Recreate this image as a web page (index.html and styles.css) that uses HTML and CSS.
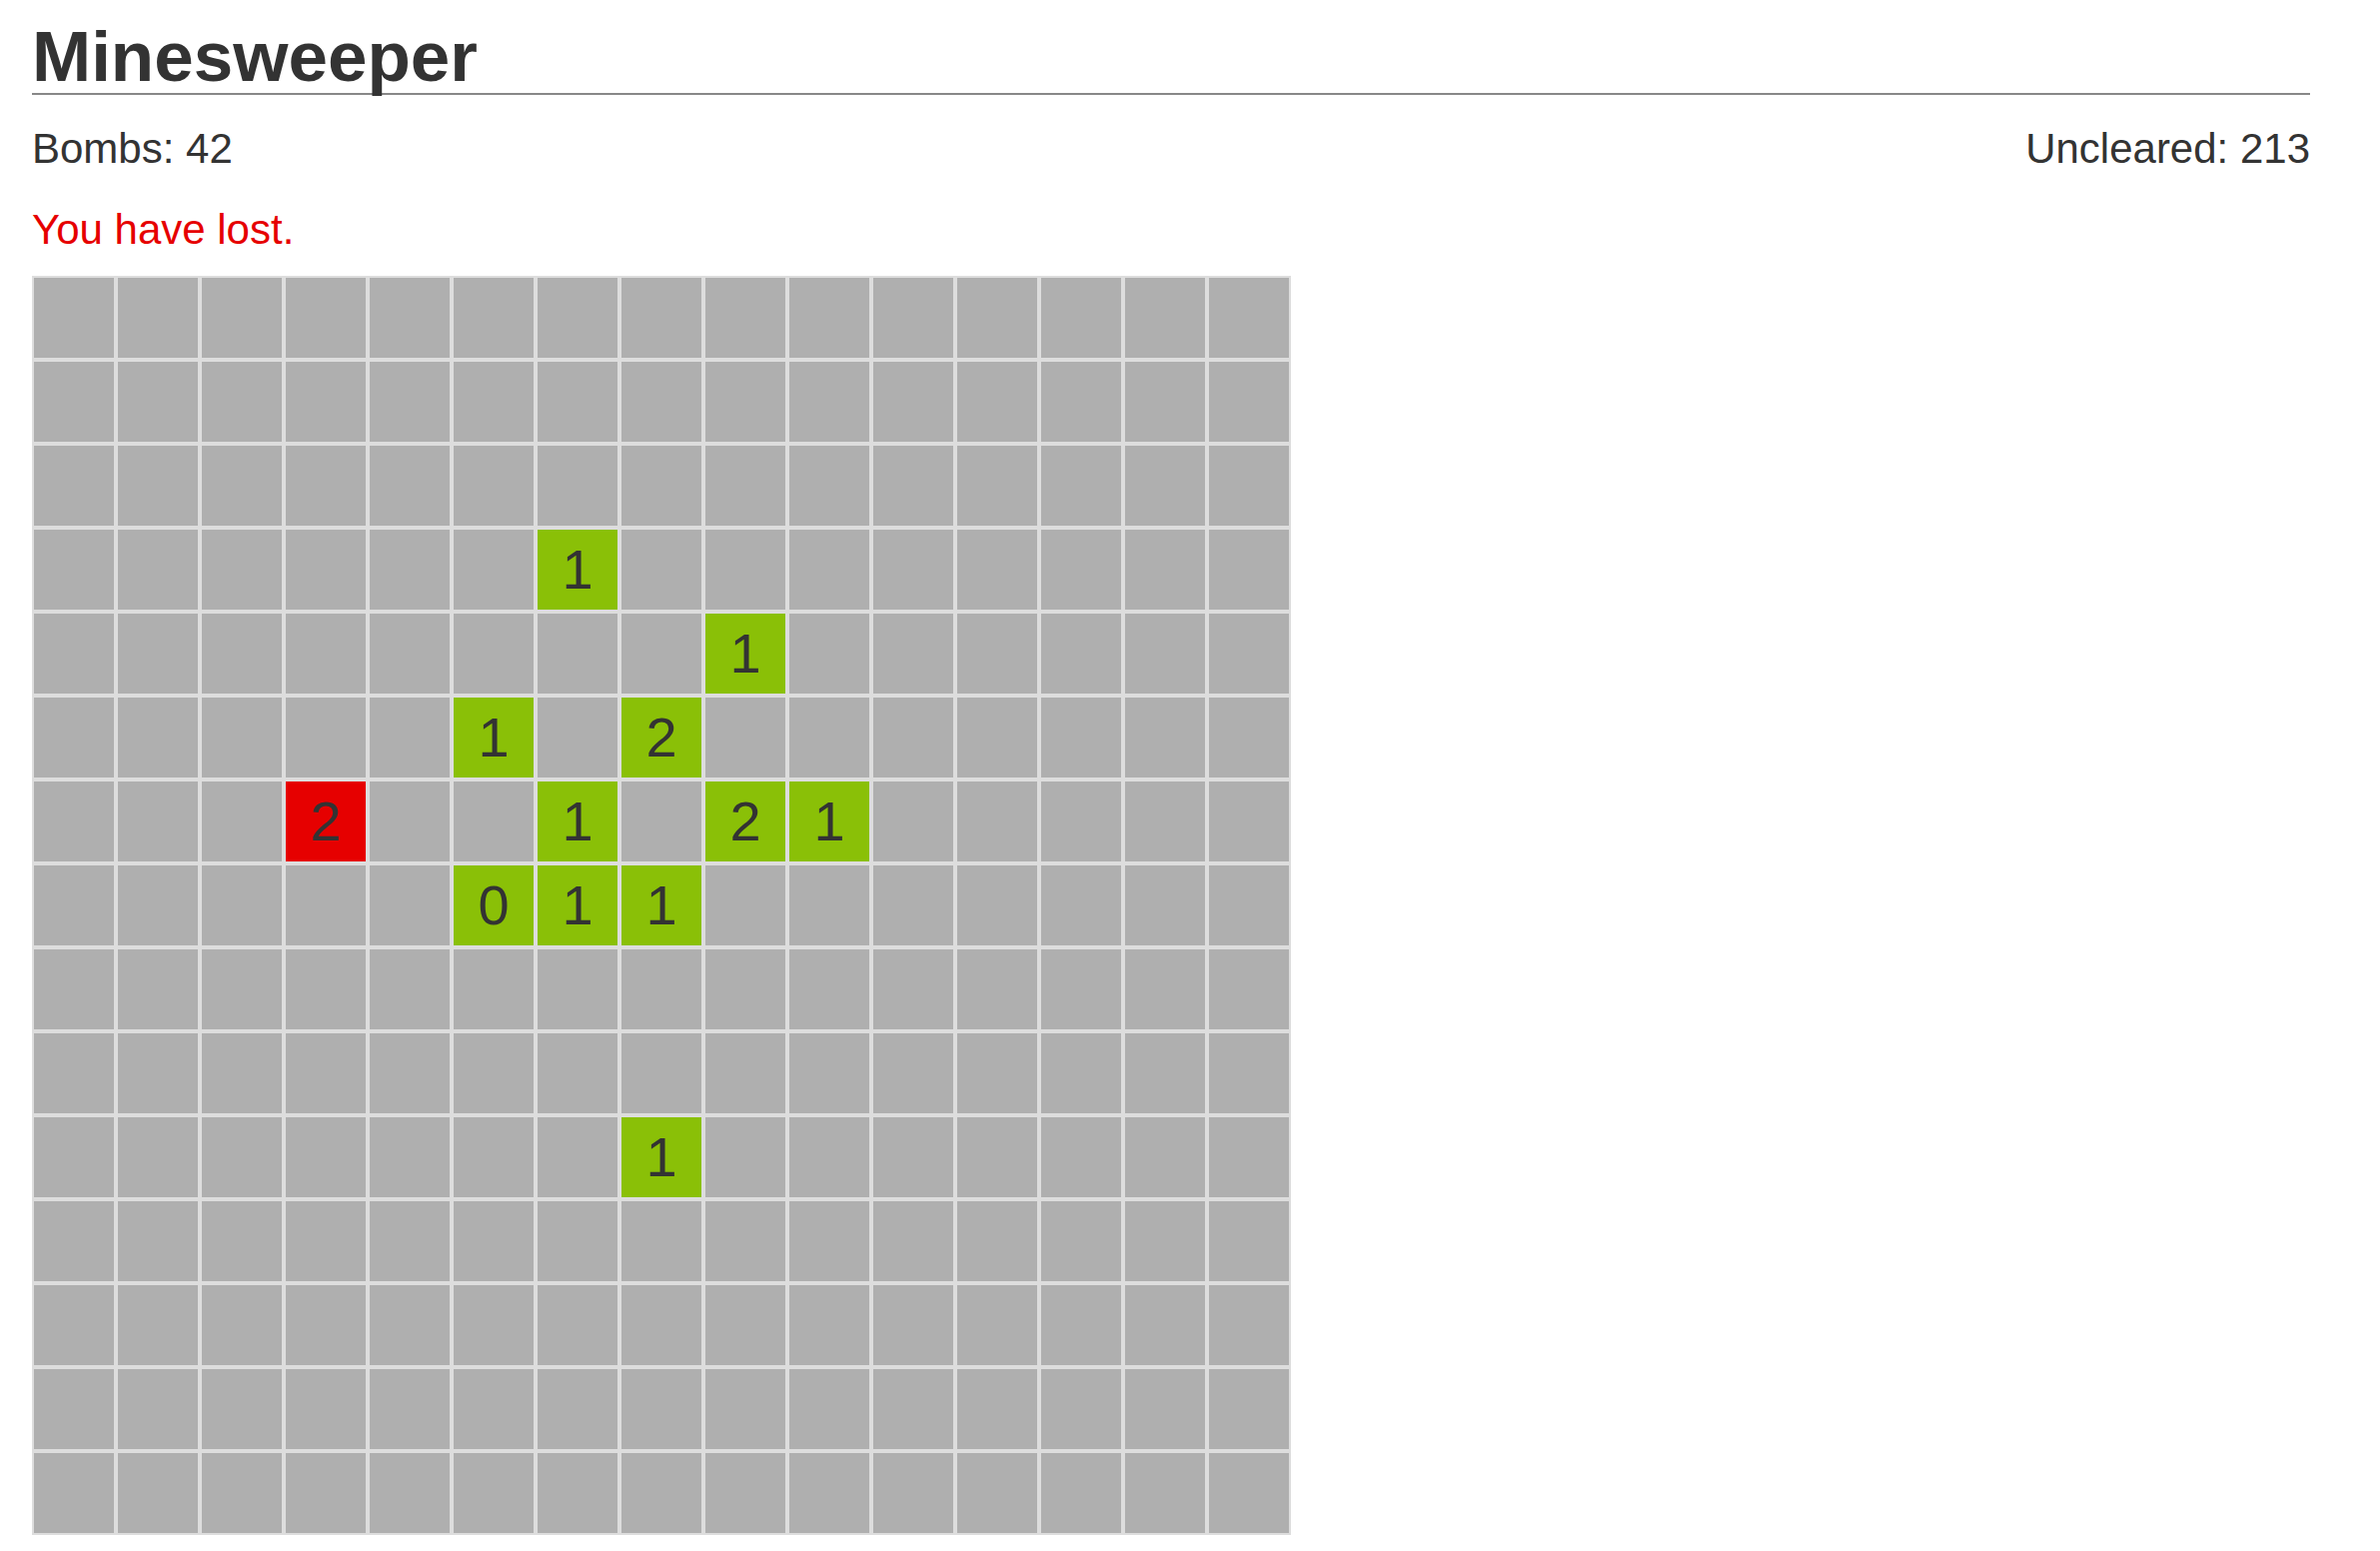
FILE: index.html
```html
<!DOCTYPE html>
<html lang="en">
<head>
<meta charset="utf-8">
<title>Minesweeper</title>
<link rel="stylesheet" href="styles.css">
</head>
<body>
<div class="page">
  <h1 class="title">Minesweeper</h1>
  <div class="stats">
    <span>Bombs: 42</span>
    <span>Uncleared: 213</span>
  </div>
  <p class="status">You have lost.</p>
  <div class="board">
    <div class="cell"></div><div class="cell"></div><div class="cell"></div><div class="cell"></div><div class="cell"></div><div class="cell"></div><div class="cell"></div><div class="cell"></div><div class="cell"></div><div class="cell"></div><div class="cell"></div><div class="cell"></div><div class="cell"></div><div class="cell"></div><div class="cell"></div>
    <div class="cell"></div><div class="cell"></div><div class="cell"></div><div class="cell"></div><div class="cell"></div><div class="cell"></div><div class="cell"></div><div class="cell"></div><div class="cell"></div><div class="cell"></div><div class="cell"></div><div class="cell"></div><div class="cell"></div><div class="cell"></div><div class="cell"></div>
    <div class="cell"></div><div class="cell"></div><div class="cell"></div><div class="cell"></div><div class="cell"></div><div class="cell"></div><div class="cell"></div><div class="cell"></div><div class="cell"></div><div class="cell"></div><div class="cell"></div><div class="cell"></div><div class="cell"></div><div class="cell"></div><div class="cell"></div>
    <div class="cell"></div><div class="cell"></div><div class="cell"></div><div class="cell"></div><div class="cell"></div><div class="cell"></div><div class="cell open">1</div><div class="cell"></div><div class="cell"></div><div class="cell"></div><div class="cell"></div><div class="cell"></div><div class="cell"></div><div class="cell"></div><div class="cell"></div>
    <div class="cell"></div><div class="cell"></div><div class="cell"></div><div class="cell"></div><div class="cell"></div><div class="cell"></div><div class="cell"></div><div class="cell"></div><div class="cell open">1</div><div class="cell"></div><div class="cell"></div><div class="cell"></div><div class="cell"></div><div class="cell"></div><div class="cell"></div>
    <div class="cell"></div><div class="cell"></div><div class="cell"></div><div class="cell"></div><div class="cell"></div><div class="cell open">1</div><div class="cell"></div><div class="cell open">2</div><div class="cell"></div><div class="cell"></div><div class="cell"></div><div class="cell"></div><div class="cell"></div><div class="cell"></div><div class="cell"></div>
    <div class="cell"></div><div class="cell"></div><div class="cell"></div><div class="cell boom">2</div><div class="cell"></div><div class="cell"></div><div class="cell open">1</div><div class="cell"></div><div class="cell open">2</div><div class="cell open">1</div><div class="cell"></div><div class="cell"></div><div class="cell"></div><div class="cell"></div><div class="cell"></div>
    <div class="cell"></div><div class="cell"></div><div class="cell"></div><div class="cell"></div><div class="cell"></div><div class="cell open">0</div><div class="cell open">1</div><div class="cell open">1</div><div class="cell"></div><div class="cell"></div><div class="cell"></div><div class="cell"></div><div class="cell"></div><div class="cell"></div><div class="cell"></div>
    <div class="cell"></div><div class="cell"></div><div class="cell"></div><div class="cell"></div><div class="cell"></div><div class="cell"></div><div class="cell"></div><div class="cell"></div><div class="cell"></div><div class="cell"></div><div class="cell"></div><div class="cell"></div><div class="cell"></div><div class="cell"></div><div class="cell"></div>
    <div class="cell"></div><div class="cell"></div><div class="cell"></div><div class="cell"></div><div class="cell"></div><div class="cell"></div><div class="cell"></div><div class="cell"></div><div class="cell"></div><div class="cell"></div><div class="cell"></div><div class="cell"></div><div class="cell"></div><div class="cell"></div><div class="cell"></div>
    <div class="cell"></div><div class="cell"></div><div class="cell"></div><div class="cell"></div><div class="cell"></div><div class="cell"></div><div class="cell"></div><div class="cell open">1</div><div class="cell"></div><div class="cell"></div><div class="cell"></div><div class="cell"></div><div class="cell"></div><div class="cell"></div><div class="cell"></div>
    <div class="cell"></div><div class="cell"></div><div class="cell"></div><div class="cell"></div><div class="cell"></div><div class="cell"></div><div class="cell"></div><div class="cell"></div><div class="cell"></div><div class="cell"></div><div class="cell"></div><div class="cell"></div><div class="cell"></div><div class="cell"></div><div class="cell"></div>
    <div class="cell"></div><div class="cell"></div><div class="cell"></div><div class="cell"></div><div class="cell"></div><div class="cell"></div><div class="cell"></div><div class="cell"></div><div class="cell"></div><div class="cell"></div><div class="cell"></div><div class="cell"></div><div class="cell"></div><div class="cell"></div><div class="cell"></div>
    <div class="cell"></div><div class="cell"></div><div class="cell"></div><div class="cell"></div><div class="cell"></div><div class="cell"></div><div class="cell"></div><div class="cell"></div><div class="cell"></div><div class="cell"></div><div class="cell"></div><div class="cell"></div><div class="cell"></div><div class="cell"></div><div class="cell"></div>
    <div class="cell"></div><div class="cell"></div><div class="cell"></div><div class="cell"></div><div class="cell"></div><div class="cell"></div><div class="cell"></div><div class="cell"></div><div class="cell"></div><div class="cell"></div><div class="cell"></div><div class="cell"></div><div class="cell"></div><div class="cell"></div><div class="cell"></div>
  </div>
</div>
</body>
</html>
```

FILE: styles.css
```css
html, body {
  margin: 0;
  padding: 0;
  background: #ffffff;
}

body {
  font-family: "Liberation Sans", Arial, Helvetica, sans-serif;
  color: #333333;
}

.page {
  width: 2280px;
  padding: 20px 0 0 32px;
}

.title {
  margin: 0;
  font-size: 71px;
  font-weight: bold;
  line-height: 73px;
  border-bottom: 2px solid #888888;
  color: #333333;
}

.stats {
  display: flex;
  justify-content: space-between;
  margin-top: 30px;
  font-size: 42px;
  line-height: 48px;
}

.status {
  margin: 33px 0 0 0;
  font-size: 42px;
  line-height: 48px;
  color: #e60000;
}

.board {
  display: grid;
  grid-template-columns: repeat(15, 84px);
  grid-auto-rows: 84px;
  margin-top: 22px;
  width: 1260px;
}

.cell {
  box-sizing: border-box;
  border: 2px solid #dddddd;
  background: #afafaf;
  font-size: 56px;
  line-height: 80px;
  text-align: center;
  color: #333333;
}

.cell.open {
  background: #8ac007;
}

.cell.boom {
  background: #e60000;
}
```
